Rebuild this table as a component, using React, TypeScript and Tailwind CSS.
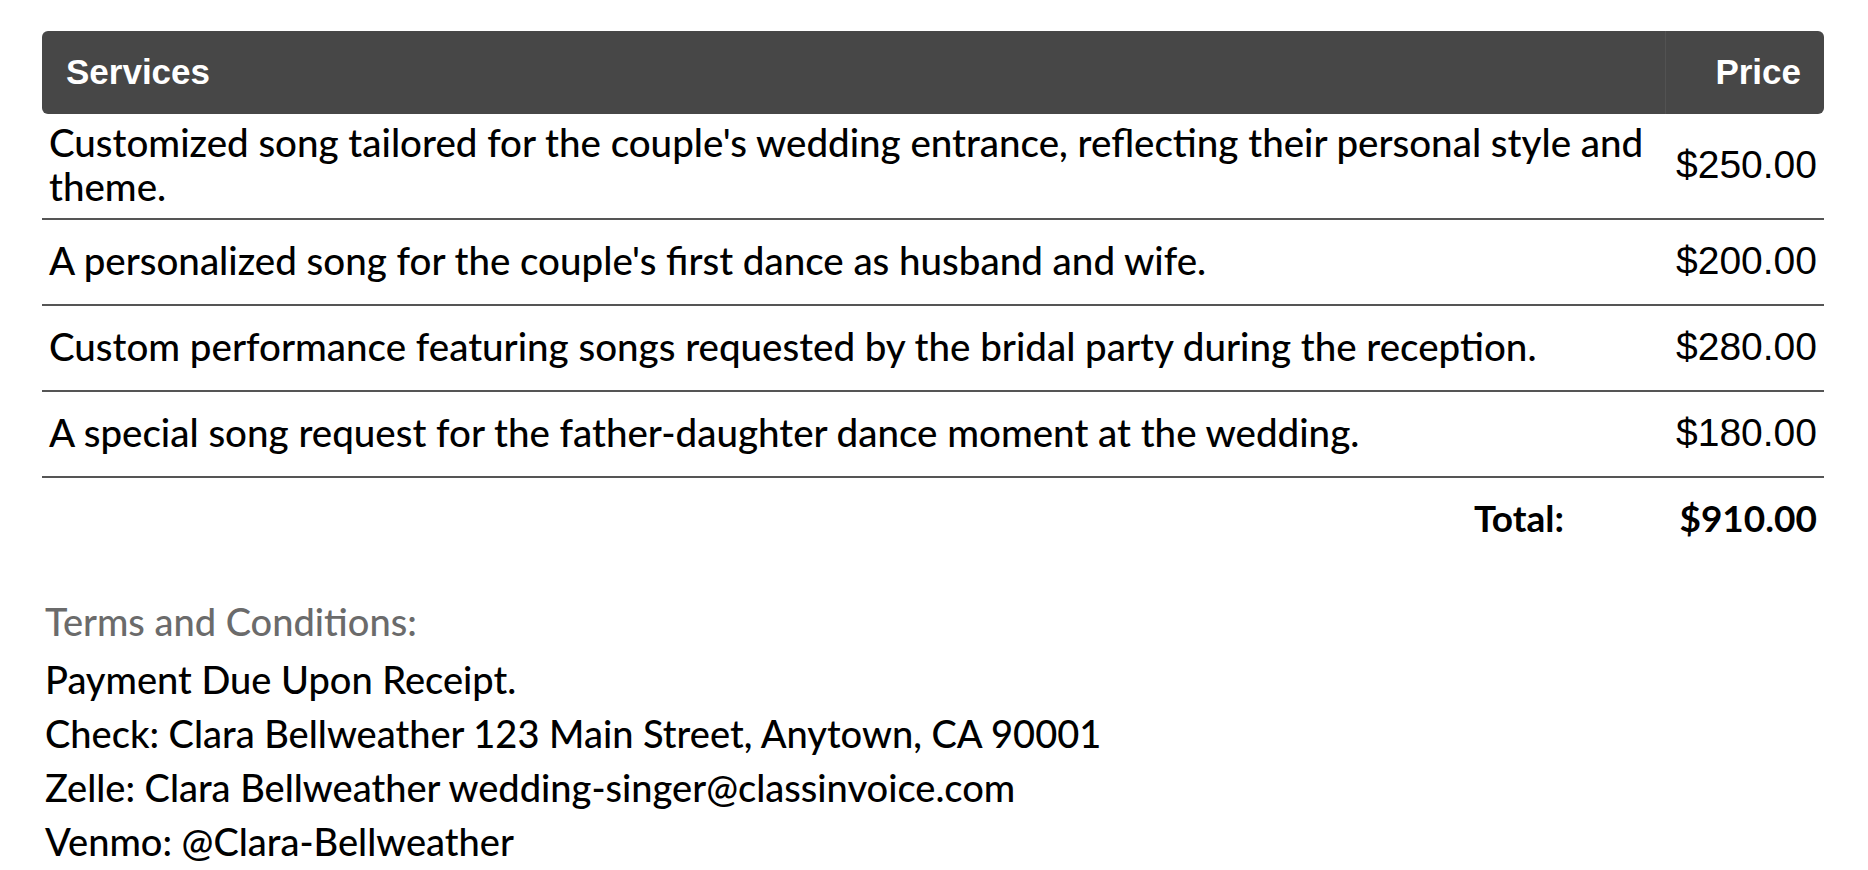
const services = [
  {
    desc: "Customized song tailored for the couple's wedding entrance, reflecting their personal style and theme.",
    price: '$250.00',
  },
  { desc: "A personalized song for the couple's first dance as husband and wife.", price: '$200.00' },
  { desc: 'Custom performance featuring songs requested by the bridal party during the reception.', price: '$280.00' },
  { desc: 'A special song request for the father-daughter dance moment at the wedding.', price: '$180.00' },
];

const terms = [
  'Payment Due Upon Receipt.',
  'Check: Clara Bellweather 123 Main Street, Anytown, CA 90001',
  'Zelle: Clara Bellweather wedding-singer@classinvoice.com',
  'Venmo: @Clara-Bellweather',
];

export default function App() {
  return (
    <div className="min-h-screen bg-white pl-[42px] pr-[44px] pt-[31px] font-['Lato',sans-serif] font-medium text-black">
      {/* Table header */}
      <div className="grid h-[83px] grid-cols-[1fr_159px] rounded-[6px] bg-[#474747] font-['Liberation_Sans',Arial,sans-serif] text-[35px] font-bold text-white">
        <div className="flex items-center pl-[24px]">Services</div>
        <div className="flex items-center justify-end border-l border-[#525252] pr-[23px]">Price</div>
      </div>

      {/* Rows */}
      {services.map((s) => (
        <div key={s.price} className="grid min-h-[86px] grid-cols-[1fr_159px] border-b-2 border-[#555]">
          <div className="flex items-center px-[7px] pt-[6px] pb-[10px] text-[38.5px] leading-[44px]">{s.desc}</div>
          <div className="flex items-center justify-end pr-[7px] pb-[2px] font-['Liberation_Sans',Arial,sans-serif] text-[39px] font-normal">
            {s.price}
          </div>
        </div>
      ))}

      {/* Total */}
      <div className="grid grid-cols-[1fr_159px] py-[18px] text-[37px] leading-[44px] font-bold">
        <div className="pr-[101px] text-right">Total:</div>
        <div className="pr-[7px] text-right">$910.00</div>
      </div>

      {/* Terms */}
      <div className="mt-[36px] pl-[3px]">
        <p className="mb-[4px] text-[38px] leading-[54px] text-[#6b6b6b]">Terms and Conditions:</p>
        {terms.map((t) => (
          <p key={t} className="text-[38px] leading-[54px]">
            {t}
          </p>
        ))}
      </div>
    </div>
  );
}
